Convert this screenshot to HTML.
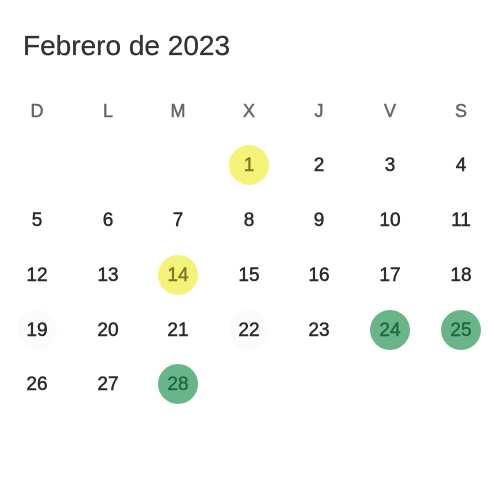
<!DOCTYPE html>
<html><head><style>
body{margin:0;width:500px;height:500px;background:#fff;font-family:"Liberation Sans",sans-serif;position:relative;overflow:hidden}
.t{position:absolute;left:23px;top:30px;font-size:28px;color:#333;-webkit-text-stroke:0.3px #333}
.c{position:absolute;width:40px;height:40px;margin:-20px 0 0 -20px;line-height:42px;text-align:center;font-size:19px;color:#2a2a2a;border-radius:50%;-webkit-text-stroke:0.5px currentColor}
.h{color:#666;font-size:18px}
.y{background:#f5f27a;color:#7a7a22}
.g{background:#6ab48a;color:#1f6a40}
.f{background:#fbfbfb}
</style></head><body>
<div class="t">Febrero de 2023</div>
<div id="cal"></div>
<script>
var xs=[37,108,178,249,319,390,461],ys=[110,165,220,275,330,384],h="DLMXJVS",o="";
for(var i=0;i<7;i++)o+='<div class="c h" style="left:'+xs[i]+'px;top:'+ys[0]+'px">'+h[i]+'</div>';
var cls={1:"y",14:"y",24:"g",25:"g",28:"g",19:"f",22:"f"};
for(var d=1;d<=28;d++){var p=d+2,r=Math.floor(p/7)+1,c=p%7;
o+='<div class="c '+(cls[d]||"")+'" style="left:'+xs[c]+'px;top:'+ys[r]+'px">'+d+'</div>';}
document.getElementById("cal").innerHTML=o;
</script>
</body></html>
